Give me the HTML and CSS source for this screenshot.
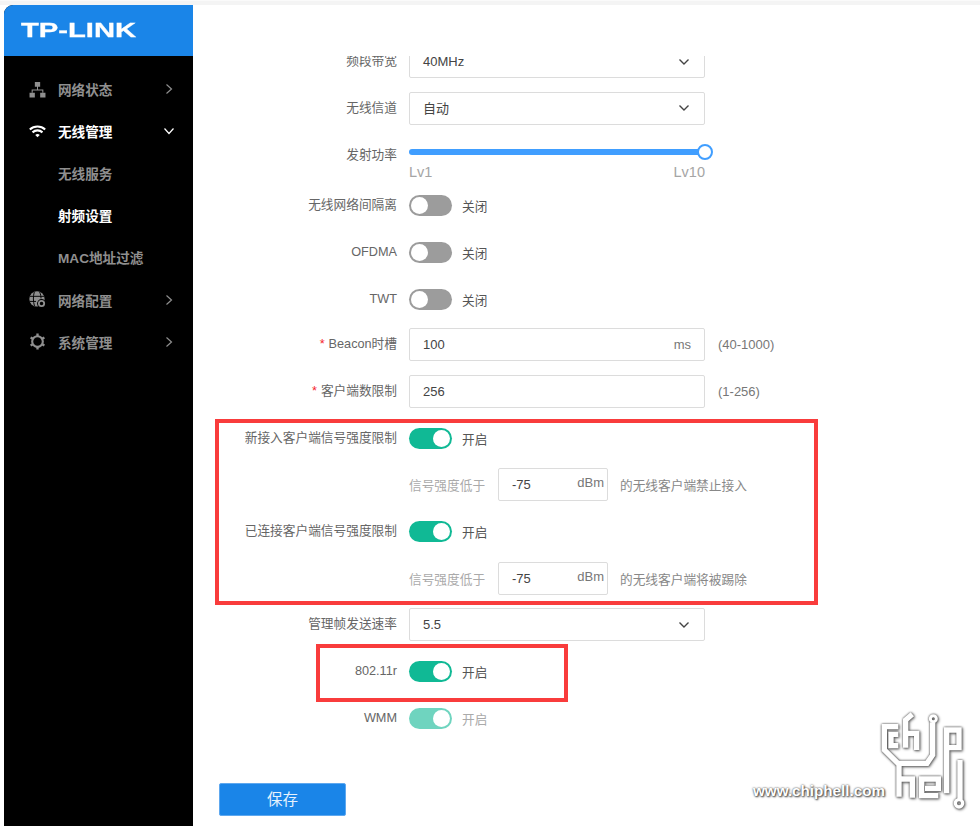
FILE: index.html
```html
<!DOCTYPE html>
<html lang="zh-CN">
<head>
<meta charset="utf-8">
<title>射频设置</title>
<link rel="stylesheet" href="styles.css">
</head>
<body>
<div class="topstrip"></div>
<div class="app">
  <aside class="sidebar">
    <div class="brand"><span class="brand-text">TP-LINK</span></div>
    <nav class="menu">
      <div class="menu-item">
        <svg class="menu-icon" viewBox="0 0 16 16"><path d="M5.500 1h5v4.500h-5zM7.500 5.500h1V8h5v3h-1V9H3.500v2h-1V8h5z" fill="#8f8f8f"/><path d="M.5 11h5v4.500h-5zM10.500 11h5v4.500h-5z" fill="#8f8f8f"/></svg>
        <span class="menu-text">网络状态</span>
        <svg class="chev" viewBox="0 0 10 12"><path d="M2.500 1.500 7.500 6l-5 4.500" /></svg>
      </div>
      <div class="menu-item active">
        <svg class="menu-icon" viewBox="0 0 16 16"><path d="M.8 6.200C4.800 2.400 11.200 2.400 15.200 6.200M3.300 8.800C6 6.300 10 6.300 12.700 8.800" fill="none" stroke="#fff" stroke-width="2"/><path d="M5.900 11.200C7.100 10.100 8.900 10.100 10.100 11.200L8 13.400z" fill="#fff"/></svg>
        <span class="menu-text">无线管理</span>
        <svg class="chev" viewBox="0 0 12 10"><path d="M1.500 2.500 6 7.500l4.500-5" /></svg>
      </div>
      <div class="menu-item sub"><span class="menu-text">无线服务</span></div>
      <div class="menu-item sub active"><span class="menu-text">射频设置</span></div>
      <div class="menu-item sub"><span class="menu-text">MAC地址过滤</span></div>
      <div class="menu-item">
        <svg class="menu-icon" viewBox="0 0 16 16"><circle cx="7.500" cy="7.500" r="7.200" fill="#8f8f8f"/><path d="M5 .8C3.800 5 3.800 10 5.200 14.200M10 .8c1 2.300 1.300 4.500 1.300 6.200M.8 5h13.400M.6 9.800h6" stroke="#000" stroke-width=".9" fill="none"/><circle cx="11.800" cy="11.800" r="4.200" fill="#000"/><circle cx="11.800" cy="11.800" r="2.500" fill="none" stroke="#8f8f8f" stroke-width="1.700"/></svg>
        <span class="menu-text">网络配置</span>
        <svg class="chev" viewBox="0 0 10 12"><path d="M2.500 1.500 7.500 6l-5 4.500" /></svg>
      </div>
      <div class="menu-item">
        <svg class="menu-icon" viewBox="0 0 16 16"><circle cx="8" cy="8" r="5" fill="none" stroke="#8f8f8f" stroke-width="2"/><path d="M8 .5v2.500M8 13v2.500M1.500 4.250l2.200 1.250M12.300 10.500l2.200 1.250M1.500 11.750l2.200-1.250M12.300 5.500l2.200-1.250" stroke="#8f8f8f" stroke-width="2.200" fill="none"/></svg>
        <span class="menu-text">系统管理</span>
        <svg class="chev" viewBox="0 0 10 12"><path d="M2.500 1.500 7.500 6l-5 4.500" /></svg>
      </div>
    </nav>
  </aside>

  <main class="main">
    <div class="clip">
      <form class="form">
        <div class="row">
          <label class="label">频段带宽</label>
          <div class="box select"><span>40MHz</span><svg class="caret" viewBox="0 0 12 8"><path d="M1.500 1.500 6 6l4.500-4.500"/></svg></div>
        </div>
        <div class="row">
          <label class="label">无线信道</label>
          <div class="box select"><span class="cjk">自动</span><svg class="caret" viewBox="0 0 12 8"><path d="M1.500 1.500 6 6l4.500-4.500"/></svg></div>
        </div>
        <div class="row slider-row">
          <label class="label">发射功率</label>
          <div class="slider">
            <div class="track"><span class="thumb"></span></div>
            <div class="levels"><span>Lv1</span><span>Lv10</span></div>
          </div>
        </div>
        <div class="row off-row">
          <label class="label">无线网络间隔离</label>
          <span class="toggle"></span><span class="state">关闭</span>
        </div>
        <div class="row off-row">
          <label class="label">OFDMA</label>
          <span class="toggle"></span><span class="state">关闭</span>
        </div>
        <div class="row off-row">
          <label class="label">TWT</label>
          <span class="toggle"></span><span class="state">关闭</span>
        </div>
        <div class="row">
          <label class="label"><i class="req">*</i>Beacon时槽</label>
          <div class="box input"><span>100</span><span class="unit">ms</span></div>
          <span class="hint">(40-1000)</span>
        </div>
        <div class="row">
          <label class="label"><i class="req">*</i>客户端数限制</label>
          <div class="box input"><span>256</span></div>
          <span class="hint">(1-256)</span>
        </div>
        <div class="row">
          <label class="label">新接入客户端信号强度限制</label>
          <span class="toggle on"></span><span class="state">开启</span>
        </div>
        <div class="row">
          <span class="label"></span>
          <span class="note">信号强度低于</span>
          <div class="box small"><span>-75</span><span class="unit up">dBm</span></div>
          <span class="note after">的无线客户端禁止接入</span>
        </div>
        <div class="row">
          <label class="label">已连接客户端信号强度限制</label>
          <span class="toggle on"></span><span class="state">开启</span>
        </div>
        <div class="row">
          <span class="label"></span>
          <span class="note">信号强度低于</span>
          <div class="box small"><span>-75</span><span class="unit up">dBm</span></div>
          <span class="note after">的无线客户端将被踢除</span>
        </div>
        <div class="row">
          <label class="label">管理帧发送速率</label>
          <div class="box select"><span>5.5</span><svg class="caret" viewBox="0 0 12 8"><path d="M1.500 1.500 6 6l4.500-4.500"/></svg></div>
        </div>
        <div class="row">
          <label class="label">802.11r</label>
          <span class="toggle on"></span><span class="state">开启</span>
        </div>
        <div class="row disabled">
          <label class="label">WMM</label>
          <span class="toggle on"></span><span class="state">开启</span>
        </div>
        <button class="save" type="button">保存</button>
      </form>
    </div>
  </main>
</div>

<div class="mark mark-a"></div>
<div class="mark mark-b"></div>

<div class="watermark">
  <span class="wm-text">www.chiphell.com</span>
  <svg class="wm-logo" viewBox="0 0 300 330">
    <g fill="none" stroke="#fff" stroke-width="16">
      <path d="M70 65H28V135L72 178V275"/>
      <path d="M70 122H48V88H70"/>
      <path d="M92 128V45L112 28"/>
      <path d="M92 85H125V135"/>
      <path d="M173 52V150L156 175H72"/>
      <path d="M215 265V75H252V128H222"/>
      <path d="M72 222H112V278"/>
      <path d="M190 272H140V222H190V250H150"/>
      <path d="M255 165V283"/>
      <circle cx="175" cy="41" r="9" stroke-width="9"/>
      <circle cx="252" cy="295" r="11" stroke-width="10"/>
    </g>
  </svg>
</div>
</body>
</html>
```
FILE: styles.css
```css
* { box-sizing: border-box; }
html, body { height: 100%; }
body {
  margin: 0;
  overflow: hidden;
  background: #fff;
  font-family: "Liberation Sans", "Noto Sans CJK SC", sans-serif;
  font-size: 13px;
  color: #555;
  position: relative;
}
.topstrip { height: 5px; background: #f4f4f4; border-top: 1px solid #fafafa; }
.app { display: flex; height: 821px; padding-left: 4px; }

.sidebar { width: 189px; flex: none; background: #000; border-top-left-radius: 9px; overflow: hidden; }
.brand { height: 51px; background: #1a85e8; padding: 15px 0 0 17px; }
.brand-text {
  display: block;
  width: 84px;
  font-size: 21px;
  line-height: 20px;
  font-weight: 700;
  color: #fff;
  transform: scaleX(1.39);
  transform-origin: left center;
  -webkit-text-stroke: .3px #fff;
}
.menu { padding-top: 12px; }
.menu-item { display: flex; align-items: center; height: 42.1px; padding: 0 19px 0 25px; color: #8f8f8f; font-size: 13.6px; font-weight: 700; }
.menu-item.active { color: #fff; }
.menu-icon { width: 17px; height: 17px; flex: none; margin-right: 12px; }
.menu-item.sub .menu-text { margin-left: 29px; }
.menu-text { flex: 1; }
.chev { width: 10px; height: 12px; fill: none; stroke: #8f8f8f; stroke-width: 1.200; }
.menu-item.active .chev { width: 12px; height: 10px; margin-right: -1px; stroke: #fff; }

.main { flex: 1; min-width: 0; padding-top: 51px; }
.clip { height: 770px; overflow: hidden; }
.form { display: flex; flex-direction: column; gap: 13.7px; margin-top: -11px; }
.row { display: flex; align-items: center; height: 33px; }
.off-row { padding-top: 2px; }
.label { width: 204px; flex: none; margin-right: 12px; text-align: right; font-size: 12.7px; line-height: 30px; height: 31px; color: #666; }
.req { font-style: normal; color: #f5222d; margin-right: 4px; }

.box { display: flex; align-items: center; justify-content: space-between; height: 33px; background: #fff; border: 1px solid #dcdcdc; border-radius: 2px; color: #444; font-size: 13px; }
.select, .input { width: 296px; padding: 0 13px 0 13px; }
.small { width: 110px; padding: 0 3px 0 13px; }
.cjk { margin-bottom: 2px; }
.unit { color: #777; font-size: 13px; }
.unit.up { margin-bottom: 4px; }
.caret { width: 12px; height: 8px; fill: none; stroke: #444; stroke-width: 1.400; margin-right: 1px; }
.hint { margin-left: 13px; color: #777; font-size: 13px; }

.slider-row { height: 36.2px; align-items: flex-start; }
.slider-row .label { margin-top: 2px; }
.slider { width: 296px; padding-top: 11px; }
.track { position: relative; height: 6px; background: #409eff; border-radius: 3px; }
.thumb { position: absolute; right: -8px; top: -5px; width: 16px; height: 16px; background: #fff; border: 2px solid #409eff; border-radius: 50%; }
.levels { display: flex; justify-content: space-between; margin-top: 9px; color: #a5a5a5; font-size: 14.5px; line-height: 17px; }

.toggle { position: relative; width: 43px; height: 21px; flex: none; background: #9c9c9c; border-radius: 11px; }
.toggle::after { content: ""; position: absolute; left: 2px; top: 2px; width: 17px; height: 17px; background: #fff; border-radius: 50%; }
.toggle.on { background: #10b995; }
.toggle.on::after { left: 24px; }
.state { margin-left: 10px; color: #555; font-size: 12.7px; }
.disabled .toggle { opacity: .6; }
.disabled .state { color: #aaa; }
.note { color: #aaa; font-size: 12.7px; width: 89px; flex: none; }
.note.after { margin-left: 12px; width: auto; color: #888; }

.save { width: 127px; height: 33px; margin: 34.3px 0 0 26px; padding: 0 0 3px; background: #1a85e8; border: 1px solid #5ea8ef; border-radius: 2px; color: #e6f2fd; font-family: inherit; font-size: 15.5px; }

.mark { position: absolute; border: 4px solid #f93c3c; }
.mark-a { left: 215px; top: 419px; width: 603px; height: 186px; }
.mark-b { left: 316px; top: 644px; width: 252px; height: 58px; }

.watermark { position: absolute; left: 753px; top: 705px; width: 222px; height: 110px; }
.wm-text { position: absolute; left: 0; top: 76px; color: #fff; font-size: 15.2px; font-weight: 700; line-height: 20px; text-shadow: 0 0 2px #333, 1px 1px 2px #444; }
.wm-logo { position: absolute; left: 122px; top: 0; width: 100px; height: 110px; filter: drop-shadow(0 0 1.200px #444) drop-shadow(1px 1px 1px #888); }
```
